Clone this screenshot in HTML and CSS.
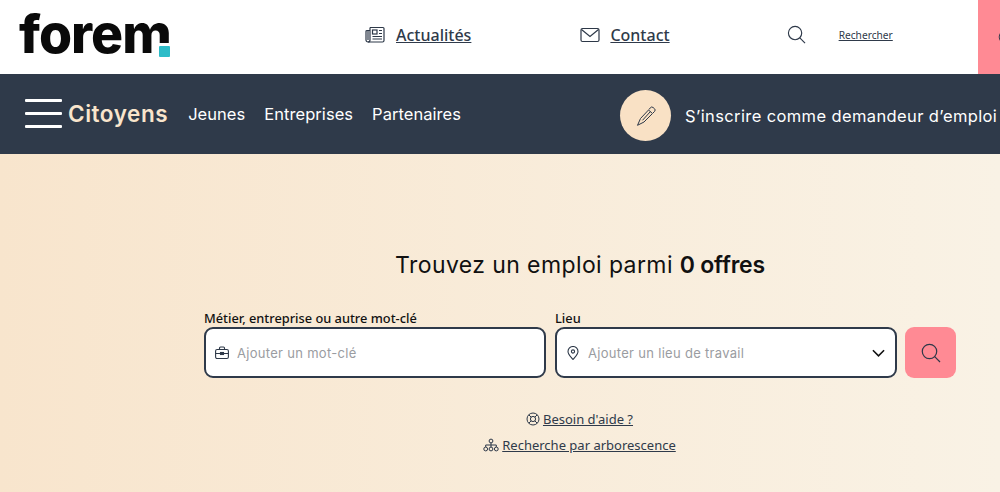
FILE: index.html
```html
<!DOCTYPE html>
<html lang="fr">

<head>
    <meta charset="UTF-8">
    <meta name="viewport" content="width=device-width, initial-scale=1.0">
    <title>Le Forem</title>
    <link rel="stylesheet" href="styles.css">
</head>

<body>

    <header class="topbar">
        <a class="logo" href="#">forem<span class="logo-dot"></span></a>
        <a class="top-link top-link-news" href="#">
            <svg class="icon-20" viewBox="0 0 20 20" fill="none" stroke="#2d3848" stroke-width="1.2">
                <path d="M5 2.500h13a1 1 0 0 1 1 1v12a1.500 1.500 0 0 1-1.500 1.500H3a2 2 0 0 1-2-2V6.500a1 1 0 0 1 1-1h3"/>
                <path d="M5 2.500V15a2 2 0 0 1-2 2M3 6v9"/>
                <rect x="7.500" y="5" width="4.500" height="4"/>
                <path d="M14 5.500h3M14 8.500h3M7.500 11.500h9.500M7.500 14h9.500"/>
            </svg>
            <span>Actualités</span>
        </a>
        <a class="top-link top-link-contact" href="#">
            <svg class="icon-20" viewBox="0 0 20 20" fill="none" stroke="#2d3848" stroke-width="1.2">
                <rect x="1" y="3.500" width="18" height="13" rx="1.500"/>
                <path d="M1.500 4.500L10 11.500l8.500-7"/>
            </svg>
            <span>Contact</span>
        </a>
        <svg class="top-search" viewBox="0 0 20 20" fill="none" stroke="#2d3848" stroke-width="1.2">
            <circle cx="8.500" cy="8.500" r="7"/>
            <path d="M13.500 13.500l5.500 5.500"/>
        </svg>
        <a class="top-search-label" href="#">Rechercher</a>
        <div class="account">
            <svg class="account-icon" viewBox="0 0 20 20" fill="none" stroke="#2d3848" stroke-width="1.200">
                <circle cx="10" cy="10" r="8.500"/>
            </svg>
        </div>
    </header>

    <nav class="mainnav">
        <div class="burger"><span></span><span></span><span></span></div>
        <a class="nav-current" href="#">Citoyens</a>
        <ul class="nav-list">
            <li><a href="#">Jeunes</a></li>
            <li><a href="#">Entreprises</a></li>
            <li><a href="#">Partenaires</a></li>
        </ul>
        <a class="signup" href="#">
            <span class="signup-circle">
                <svg viewBox="0 0 20 20" fill="none" stroke="#2d3848" stroke-width="1">
                    <path d="M4.500 12.500L12.500 4l4 3.500L8 16l-6.500 3.300z"/>
                    <path d="M13 3.500l1.300-1.700a2 2 0 0 1 2.800-.3l1.300 1.100a2 2 0 0 1 .2 2.800L17 7"/>
                    <path d="M6.500 14.300l7.800-8.600"/>
                </svg>
            </span>
            <span>S’inscrire comme demandeur d’emploi</span>
        </a>
    </nav>

    <main class="hero">
        <div class="hero-inner">
            <h1>Trouvez un emploi parmi <strong>0 offres</strong></h1>
            <form class="search-form" action="javascript:void(0)">
                <div class="field field-keyword">
                    <label for="keyword">Métier, entreprise ou autre mot-clé</label>
                    <div class="input-box">
                        <svg class="icon-14" viewBox="0 0 14 14" fill="none" stroke="#2d3848" stroke-width="1.100">
                            <rect x="0.600" y="3.500" width="12.800" height="9" rx="1.500"/>
                            <path d="M4.500 3.500V2a1 1 0 0 1 1-1h3a1 1 0 0 1 1 1v1.500M0.600 7.500h12.800"/>
                            <rect x="5.500" y="6.500" width="3" height="2" fill="#2d3848"/>
                        </svg>
                        <input type="text" id="keyword" placeholder="Ajouter un mot-clé">
                    </div>
                </div>
                <div class="field">
                    <label for="place">Lieu</label>
                    <div class="input-box">
                        <svg class="icon-14" viewBox="0 0 14 14" fill="none" stroke="#2d3848" stroke-width="1.100">
                            <path d="M7 13.500C4.500 10.500 2 8.300 2 5.500a5 5 0 0 1 10 0c0 2.800-2.500 5-5 8z"/>
                            <circle cx="7" cy="5.500" r="1.600"/>
                        </svg>
                        <input type="text" id="place" placeholder="Ajouter un lieu de travail">
                        <svg class="chevron" viewBox="0 0 14 8" fill="none" stroke="#111" stroke-width="1.700">
                            <path d="M1 1l6 6 6-6"/>
                        </svg>
                    </div>
                </div>
                <button class="search-btn" type="submit" aria-label="Rechercher">
                    <svg viewBox="0 0 20 20" fill="none" stroke="#2d3848" stroke-width="1.200">
                        <circle cx="8.500" cy="8.500" r="7.200"/>
                        <path d="M13.700 13.700l5.300 5.300"/>
                    </svg>
                </button>
            </form>
            <div class="help-links">
                <a href="#">
                    <svg class="icon-14" viewBox="0 0 14 14" fill="none" stroke="#2d3848" stroke-width="1">
                        <circle cx="7" cy="7" r="6"/>
                        <circle cx="7" cy="7" r="2.600"/>
                        <path d="M2.800 2.800l2.400 2.400M11.200 2.800L8.800 5.200M2.800 11.200l2.400-2.400M11.200 11.200L8.800 8.800"/>
                    </svg>
                    <span>Besoin d'aide ?</span>
                </a>
                <a href="#">
                    <svg class="icon-tree" viewBox="0 0 16 14" fill="none" stroke="#2d3848" stroke-width="1">
                        <circle cx="8" cy="3" r="1.900"/>
                        <circle cx="2.700" cy="11" r="1.900"/>
                        <circle cx="8" cy="11" r="1.900"/>
                        <circle cx="13.300" cy="11" r="1.900"/>
                        <path d="M8 5v4M2.700 9V7h10.600v2"/>
                    </svg>
                    <span>Recherche par arborescence</span>
                </a>
            </div>
        </div>
    </main>

</body>

</html>
```

FILE: styles.css
```css
* {
    margin: 0;
    padding: 0;
    box-sizing: border-box;
}

body {
    width: 1000px;
    height: 492px;
    overflow: hidden;
    font-family: 'Noto Sans', sans-serif;
    color: #2f3a4a;
    background-color: #fff;
}

a {
    color: inherit;
}

/* Top bar */
.topbar {
    height: 74px;
    display: flex;
    align-items: center;
    background-color: #fff;
}

.logo {
    position: relative;
    display: block;
    margin-left: 19px;
    margin-bottom: 7px;
    width: 151px;
    font-family: 'Inter', sans-serif;
    font-size: 53.500px;
    font-weight: 800;
    line-height: 64px;
    letter-spacing: -1px;
    color: #0a0a0a;
    text-decoration: none;
}

.logo-dot {
    position: absolute;
    right: 0;
    bottom: 9px;
    width: 11px;
    height: 11px;
    background-color: #2dbcc8;
    border-radius: 1px;
    box-shadow: 0 0 0 3px #fff;
}

.top-link {
    display: flex;
    align-items: center;
    gap: 11px;
    margin-bottom: 5px;
    font-size: 16px;
    font-weight: 500;
}

.top-link-news {
    margin-left: 195px;
}

.top-link-contact {
    margin-left: 109px;
    gap: 10px;
}

.icon-20 {
    width: 20px;
    height: 20px;
}

.top-search {
    width: 19px;
    height: 19px;
    margin-left: 117px;
    margin-bottom: 5px;
}

.top-search-label {
    margin-left: 33px;
    margin-bottom: 5px;
    font-size: 10.200px;
}

.account {
    align-self: stretch;
    flex-shrink: 0;
    width: 22px;
    margin-left: auto;
    background-color: #ff8a94;
    display: flex;
    align-items: center;
    padding-left: 20px;
    overflow: hidden;
}

.account-icon {
    width: 16px;
    height: 16px;
    flex-shrink: 0;
}

/* Main nav */
.mainnav {
    height: 80px;
    display: flex;
    align-items: center;
    padding-left: 25px;
    background-color: #2f3a4a;
    color: #fff;
    white-space: nowrap;
}

.burger {
    width: 37px;
    display: flex;
    flex-direction: column;
    gap: 10px;
    margin-top: -1px;
}

.burger span {
    display: block;
    height: 3px;
    background-color: #fff;
    border-radius: 1px;
}

.nav-current {
    margin-left: 6px;
    margin-top: -1px;
    font-family: 'Inter', sans-serif;
    font-size: 22.500px;
    font-weight: 600;
    letter-spacing: 0.55px;
    color: #f9e5cc;
    text-decoration: none;
}

.nav-list {
    list-style: none;
    display: flex;
    gap: 19px;
    margin-left: 20px;
    margin-top: -1px;
}

.nav-list a {
    font-family: 'Inter', sans-serif;
    font-size: 16.500px;
    letter-spacing: 0.05px;
    color: #fff;
    text-decoration: none;
}

.signup {
    display: flex;
    align-items: center;
    gap: 14px;
    margin-left: 159px;
    margin-top: 3px;
    font-family: 'Inter', sans-serif;
    font-size: 16.500px;
    letter-spacing: 0.38px;
    color: #fff;
    text-decoration: none;
}

.signup-circle {
    width: 51px;
    height: 51px;
    border-radius: 50%;
    background-color: #f9e1c5;
    display: flex;
    align-items: center;
    justify-content: center;
    flex-shrink: 0;
}

.signup-circle svg {
    width: 20px;
    height: 20px;
}

/* Hero */
.hero {
    height: 338px;
    background: linear-gradient(90deg, #f8e5cd, #f9f2e5);
    padding: 94px 0 0 204px;
}

.hero-inner {
    width: 752px;
}

.hero h1 {
    font-family: 'Inter', sans-serif;
    font-size: 23px;
    font-weight: 400;
    line-height: 34px;
    letter-spacing: 0.4px;
    text-align: center;
    color: #111;
}

.hero h1 strong {
    font-weight: 600;
    letter-spacing: -0.2px;
}

.search-form {
    display: flex;
    align-items: flex-end;
    gap: 8px;
    margin-top: 27px;
}

.field {
    width: 342px;
}

.field-keyword {
    margin-right: 1px;
}

.field label {
    display: block;
    font-size: 12.800px;
    font-weight: 500;
    line-height: 18px;
    color: #111;
}

.input-box {
    height: 51px;
    display: flex;
    align-items: center;
    gap: 8px;
    padding: 0 10px 0 9px;
    background-color: #fff;
    border: 2px solid #2f3a4a;
    border-radius: 9px;
}

.input-box input {
    flex: 1;
    min-width: 0;
    border: none;
    outline: none;
    background: none;
    font-family: 'Inter', sans-serif;
    font-size: 13px;
    letter-spacing: 0.3px;
}

.input-box input::placeholder {
    color: #9a9ca1;
}

.icon-14 {
    width: 14px;
    height: 14px;
    flex-shrink: 0;
}

.chevron {
    width: 13px;
    height: 8px;
    flex-shrink: 0;
}

.search-btn {
    width: 51px;
    height: 51px;
    flex-shrink: 0;
    border: none;
    border-radius: 9px;
    background-color: #ff8a94;
    display: flex;
    align-items: center;
    justify-content: center;
}

.search-btn svg {
    width: 20px;
    height: 20px;
}

.help-links {
    display: flex;
    flex-direction: column;
    align-items: center;
    gap: 6px;
    margin-top: 31px;
    padding-right: 1px;
    font-size: 13px;
    line-height: 20px;
}

.help-links a {
    display: flex;
    align-items: center;
    gap: 3px;
}

.icon-tree {
    width: 16px;
    height: 14px;
    flex-shrink: 0;
}
```
